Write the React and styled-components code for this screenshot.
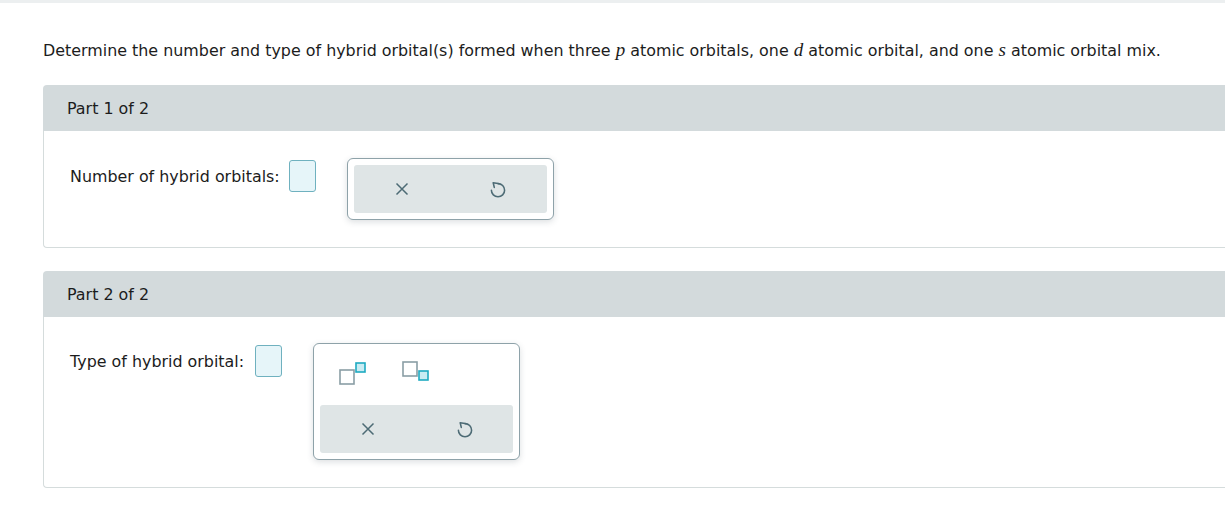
import styled, { createGlobalStyle } from 'styled-components';

const GlobalStyle = createGlobalStyle`
  body {
    margin: 0;
    background: #fff;
    font-family: "DejaVu Sans", Verdana, sans-serif;
    color: #1c1c1c;
  }
`;

const Page = styled.div`
  width: 1225px;
  height: 508px;
  overflow: hidden;
  border-top: 3px solid #eceff0;
  box-sizing: border-box;
`;

const Content = styled.div`
  padding: 37px 0 0 43px;
`;

const Question = styled.p`
  margin: 0 0 24px;
  font-size: 15.9px;
  line-height: 20px;
`;

const Var = styled.i`
  font-family: "Liberation Serif", "Times New Roman", serif;
  font-size: 19px;
`;

const PartCard = styled.section`
  margin-bottom: 23px;
`;

const PartHeader = styled.div`
  height: 46px;
  display: flex;
  align-items: center;
  padding-left: 24px;
  background: #d3dadc;
  border-radius: 4px 0 0 0;
  font-size: 15.9px;
`;

const PartBody = styled.div`
  display: flex;
  align-items: flex-start;
  padding: ${(p) => p.$pad};
  border: 1px solid #d5dcdc;
  border-top: none;
  border-right: none;
  border-radius: 0 0 0 4px;
`;

const Label = styled.span`
  font-size: 15.9px;
  line-height: 20px;
  margin-top: 9px;
  margin-right: ${(p) => p.$gap || 9}px;
`;

const AnswerBox = styled.div`
  width: 27px;
  height: 32px;
  box-sizing: border-box;
  margin-top: 2px;
  border: 1px solid #6fb1bf;
  border-radius: 3px;
  background: #e6f5f9;
  margin-right: 31px;
`;

const ToolBox = styled.div`
  width: 207px;
  box-sizing: border-box;
  padding: 6px;
  border: 1px solid #8ea2a9;
  border-radius: 6px;
  background: #fff;
  box-shadow: 0 2px 6px rgba(60, 80, 90, 0.18);
`;

const FormatRow = styled.div`
  display: grid;
  grid-template-columns: 64px 64px 64px;
  height: 55px;
`;

const FormatButton = styled.div`
  display: flex;
  align-items: center;
  justify-content: center;
  padding-bottom: 9px;
`;

const ActionRow = styled.div`
  display: grid;
  grid-template-columns: 1fr 1fr;
  height: 48px;
  background: #dfe5e6;
  border-radius: 3px;
`;

const IconButton = styled.div`
  display: flex;
  align-items: center;
  justify-content: center;
`;

const CloseIcon = () => (
  <svg width="14" height="14" viewBox="0 0 14 14">
    <path d="M1.5 1.5 L12.5 12.5 M12.5 1.5 L1.5 12.5" stroke="#4d6b75" strokeWidth="1.5" fill="none" />
  </svg>
);

const UndoIcon = () => (
  <svg width="22" height="24" viewBox="0 0 18 20">
    <path
      d="M3.5 11 A5.5 5.5 0 1 0 9 5.5"
      stroke="#4d6b75"
      strokeWidth="1.3"
      fill="none"
      strokeLinecap="round"
    />
    <path
      d="M5.9 8.7 L5 4.8 L9 5.5"
      stroke="#4d6b75"
      strokeWidth="1.3"
      fill="none"
      strokeLinecap="round"
      strokeLinejoin="round"
    />
  </svg>
);

const SuperscriptIcon = () => (
  <svg width="30" height="26" viewBox="0 0 30 26">
    <rect x="3" y="10" width="14" height="14" fill="#fff" stroke="#8a9ea5" strokeWidth="1.6" />
    <rect x="19" y="3" width="9" height="9" fill="#c9ecf3" stroke="#1eaac1" strokeWidth="1.6" />
  </svg>
);

const SubscriptIcon = () => (
  <svg width="30" height="26" viewBox="0 0 30 26">
    <rect x="2" y="2" width="14" height="14" fill="#fff" stroke="#8a9ea5" strokeWidth="1.6" />
    <rect x="18" y="11" width="9" height="9" fill="#c9ecf3" stroke="#1eaac1" strokeWidth="1.6" />
  </svg>
);

const Actions = () => (
  <ActionRow>
    <IconButton>
      <CloseIcon />
    </IconButton>
    <IconButton>
      <UndoIcon />
    </IconButton>
  </ActionRow>
);

const App = () => {
  return (
    <Page>
      <GlobalStyle />
      <Content>
        <Question>
          Determine the number and type of hybrid orbital(s) formed when three <Var>p</Var> atomic
          orbitals, one <Var>d</Var> atomic orbital, and one <Var>s</Var> atomic orbital mix.
        </Question>

        <PartCard>
          <PartHeader>Part 1 of 2</PartHeader>
          <PartBody $pad="27px 0 27px 26px">
            <Label>Number of hybrid orbitals:</Label>
            <AnswerBox />
            <ToolBox>
              <Actions />
            </ToolBox>
          </PartBody>
        </PartCard>

        <PartCard>
          <PartHeader>Part 2 of 2</PartHeader>
          <PartBody $pad="26px 0 27px 26px">
            <Label $gap={11}>Type of hybrid orbital:</Label>
            <AnswerBox />
            <ToolBox>
              <FormatRow>
                <FormatButton>
                  <SuperscriptIcon />
                </FormatButton>
                <FormatButton>
                  <SubscriptIcon />
                </FormatButton>
              </FormatRow>
              <Actions />
            </ToolBox>
          </PartBody>
        </PartCard>
      </Content>
    </Page>
  );
};

export default App;
